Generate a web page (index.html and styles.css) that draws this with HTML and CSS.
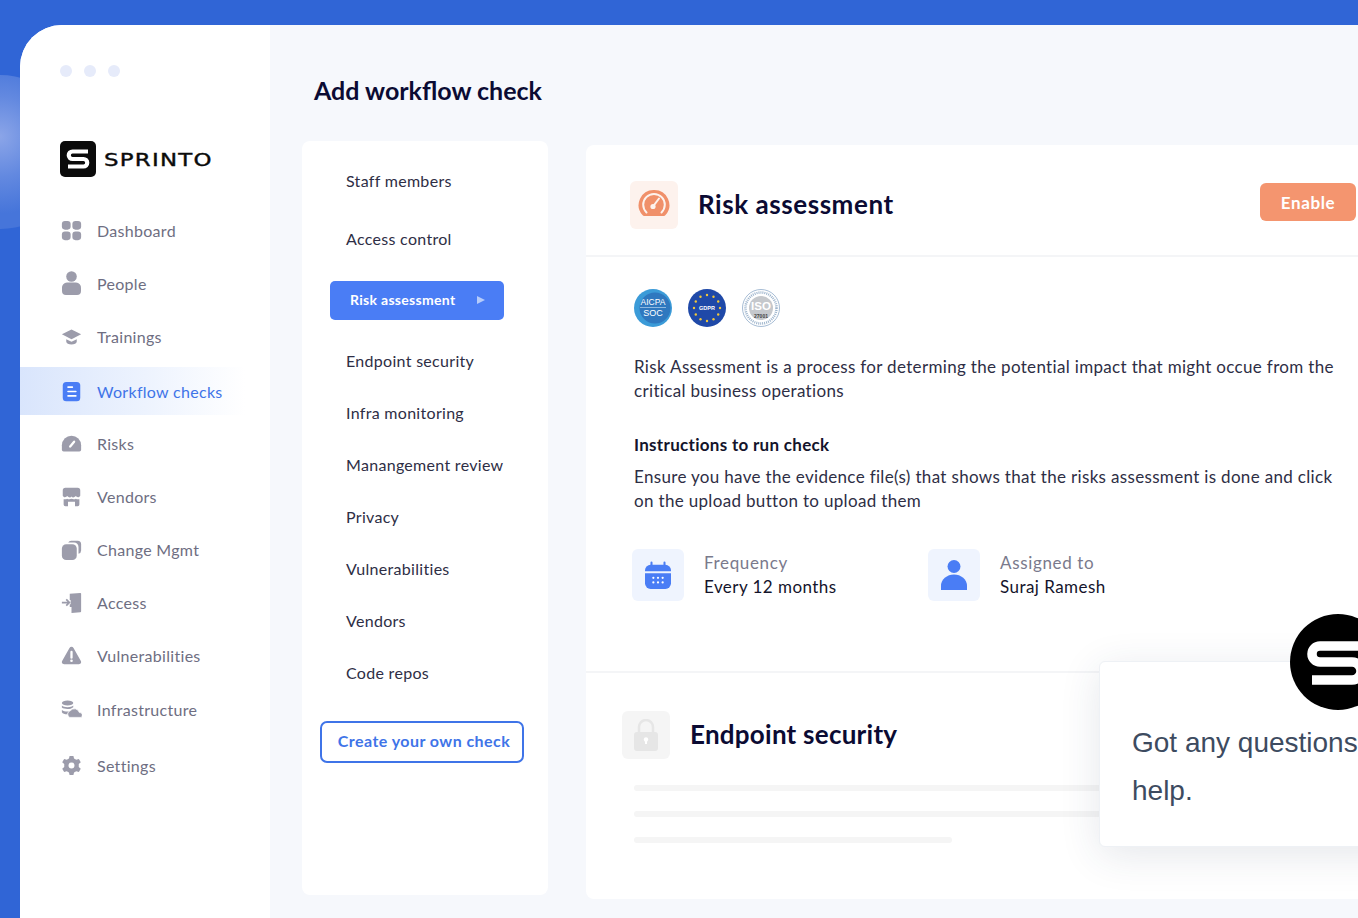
FILE: index.html
```html
<!DOCTYPE html>
<html lang="en">
<head>
    <meta charset="UTF-8">
    <meta name="viewport" content="width=device-width, initial-scale=1.0">
    <title>Sprinto - Add workflow check</title>
    <link rel="stylesheet" href="styles.css">
</head>
<body>
    <div class="glow"></div>

    <div class="app">
        <aside class="sidebar">
            <div class="dots"><span></span><span></span><span></span></div>

            <div class="logo">
                <svg class="logo-mark" viewBox="0 0 36 36">
                    <rect width="36" height="36" rx="5" fill="#0b0b0b"/>
                    <path d="M28 10.500H12.500a3.700 3.700 0 0 0 0 7.500h11a3.700 3.700 0 0 1 0 7.500H8" fill="none" stroke="#fff" stroke-width="4.200"/>
                </svg>
                <span class="logo-text">SPRINTO</span>
            </div>

            <nav class="nav">
                <a class="nav-item">
                    <svg viewBox="0 0 24 24"><rect x="1" y="1" width="10" height="10" rx="3.500"/><rect x="13" y="1" width="10" height="10" rx="3.500"/><rect x="1" y="13" width="10" height="10" rx="3.500"/><rect x="13" y="13" width="10" height="10" rx="3.500"/></svg>
                    Dashboard
                </a>
                <a class="nav-item">
                    <svg class="icon-tall" viewBox="0 0 21 24"><circle cx="10.500" cy="5.500" r="5.300"/><path d="M1 17a5 5 0 0 1 5-5.500h9a5 5 0 0 1 5 5.500v3a4 4 0 0 1-4 4H5a4 4 0 0 1-4-4z"/></svg>
                    People
                </a>
                <a class="nav-item">
                    <svg viewBox="0 0 24 24"><path d="M12 4 23 9.500 12 15 1 9.500z"/><path d="M6 15.200 12 18l6-2.800V18c0 1.800-2.800 3.200-6 3.200S6 19.800 6 18z"/></svg>
                    Trainings
                </a>
                <a class="nav-item nav-active">
                    <svg viewBox="0 0 24 24"><rect x="2" y="1" width="20" height="22" rx="4" fill="#4a7df5"/><path d="M8 7h5M8 12h9M8 17h9" stroke="#fff" stroke-width="1.800" stroke-linecap="round"/></svg>
                    Workflow checks
                </a>
                <a class="nav-item">
                    <svg viewBox="0 0 24 24"><path d="M12 3a11 11 0 0 1 11 11v5a2 2 0 0 1-2 2H3a2 2 0 0 1-2-2v-5A11 11 0 0 1 12 3z"/><path d="M10.500 15.500 15 10" stroke="#fff" stroke-width="2.600" stroke-linecap="round"/></svg>
                    Risks
                </a>
                <a class="nav-item">
                    <svg viewBox="0 0 24 24"><path d="M5 2h14a3 3 0 0 1 3 3v6c-2 3-4 1.500-5 .5-2 2-4 2-5 .5-1 1.500-3 1.500-5-.5-1 1-3 2.500-5-.5V5a3 3 0 0 1 3-3z"/><path d="M3 15c1.500.5 3 .3 4-.5 1 .7 3 1 5 .2 2 .8 4 .5 5-.2 1 .8 2.500 1 4 .5v6a2 2 0 0 1-2 2h-3v-5H8v5H5a2 2 0 0 1-2-2z"/></svg>
                    Vendors
                </a>
                <a class="nav-item">
                    <svg viewBox="0 0 24 24"><path d="M12 2h7a4 4 0 0 1 4 4v7a4 4 0 0 1-3 3.800V9a5 5 0 0 0-5-5H8.200A4 4 0 0 1 12 2z"/><rect x="1" y="6" width="17" height="18" rx="5"/></svg>
                    Change Mgmt
                </a>
                <a class="nav-item">
                    <svg viewBox="0 0 24 24"><path d="M10 2 22 1a1 1 0 0 1 1 1v20a1 1 0 0 1-1 1l-10 1V17h-2v-3h1V9h-1z"/><path d="M1 12h8M6 8.500 9.500 12 6 15.500" fill="none" stroke="#9c9cab" stroke-width="2"/></svg>
                    Access
                </a>
                <a class="nav-item">
                    <svg viewBox="0 0 24 24"><path d="M12 2c1 0 1.800.5 2.300 1.400l8.400 15c1 1.700-.2 3.600-2.200 3.600H3.500c-2 0-3.200-1.900-2.200-3.600l8.400-15C10.200 2.500 11 2 12 2z"/><path d="M12 8v6.500" stroke="#fff" stroke-width="2.600" stroke-linecap="round"/><circle cx="12" cy="18" r="1.500" fill="#fff"/></svg>
                    Vulnerabilities
                </a>
                <a class="nav-item">
                    <svg viewBox="0 0 24 24"><ellipse cx="7.500" cy="4.500" rx="6.500" ry="2.800"/><path d="M1 7.500c2 2.500 11 2.500 13 0v2c-1 .6-2 1-3 1.500-3 .8-8 .5-10-1.200zM1 12.500c2 1.500 5 2 8 1.700-1 .8-1.500 2-1.500 3.200-3 .1-5.500-.7-6.500-2.400z"/><path d="M10 21a4 4 0 0 1 .5-7.500 6 6 0 0 1 10.500 2 3 3 0 0 1 2 5.500z" stroke="#fff" stroke-width=".8"/></svg>
                    Infrastructure
                </a>
                <a class="nav-item">
                    <svg viewBox="0 0 24 24"><path d="M9.800 1h4.400l.7 3 2.500 1.400 3-.9 2.200 3.800-2.300 2.100v3.200l2.300 2.100-2.200 3.800-3-.9-2.500 1.400-.7 3H9.800l-.7-3-2.500-1.400-3 .9-2.200-3.800 2.300-2.100v-3.200L1.400 8.300l2.200-3.800 3 .9L9.100 4z"/><circle cx="12" cy="12" r="3.400" fill="#fff"/></svg>
                    Settings
                </a>
            </nav>
        </aside>

        <main class="main">
            <h1 class="page-title">Add workflow check</h1>

            <div class="columns">
                <div class="menu-card">
                    <a class="menu-item">Staff members</a>
                    <a class="menu-item menu-item-second">Access control</a>
                    <a class="menu-pill">Risk assessment <i class="pill-arrow"></i></a>
                    <a class="menu-item">Endpoint security</a>
                    <a class="menu-item">Infra monitoring</a>
                    <a class="menu-item">Manangement review</a>
                    <a class="menu-item">Privacy</a>
                    <a class="menu-item">Vulnerabilities</a>
                    <a class="menu-item">Vendors</a>
                    <a class="menu-item">Code repos</a>
                    <button class="create-btn">Create your own check</button>
                </div>

                <div class="check-card">
                    <div class="check-header">
                        <div class="check-icon">
                            <svg viewBox="0 0 32 32" width="32" height="32">
                                <path d="M16 1A15 15 0 0 1 27.500 26c-.4.6-1 1-1.700 1H6.200c-.7 0-1.300-.4-1.700-1A15 15 0 0 1 16 1z" fill="#f0906a"/>
                                <path d="M8.500 23.500A10.800 10.800 0 1 1 23.500 23.500" fill="none" stroke="#fdf2ed" stroke-width="2" stroke-linecap="round"/>
                                <path d="M15 17.500 21 9.500" stroke="#fdf2ed" stroke-width="2" stroke-linecap="round"/>
                                <circle cx="15" cy="17.500" r="2.600" fill="#fdf2ed"/>
                            </svg>
                        </div>
                        <h2 class="check-title check-title-wide">Risk assessment</h2>
                        <button class="enable-btn">Enable</button>
                    </div>

                    <div class="check-body">
                        <div class="badges">
                            <svg viewBox="0 0 38 38">
                                <circle cx="19" cy="19" r="19" fill="#3b9bd8"/>
                                <circle cx="21" cy="19" r="15.500" fill="#2f78bf"/>
                                <text x="19" y="16" class="badge-text badge-light" font-size="8.500">AICPA</text>
                                <path d="M6 18.500h26" stroke="#cfe4f5" stroke-width=".6"/>
                                <text x="19" y="27" class="badge-text badge-light" font-size="9">SOC</text>
                            </svg>
                            <svg viewBox="0 0 38 38">
                                <circle cx="19" cy="19" r="19" fill="#1f49a8"/>
                                <text x="19" y="21" class="badge-text badge-bold badge-light" font-size="5.500">GDPR</text>
                                <g fill="#f2c83a">
                                    <circle cx="19" cy="6" r="1.200"/><circle cx="25.500" cy="7.800" r="1.200"/><circle cx="30.200" cy="12.500" r="1.200"/>
                                    <circle cx="32" cy="19" r="1.200"/><circle cx="30.200" cy="25.500" r="1.200"/><circle cx="25.500" cy="30.200" r="1.200"/>
                                    <circle cx="19" cy="32" r="1.200"/><circle cx="12.500" cy="30.200" r="1.200"/><circle cx="7.800" cy="25.500" r="1.200"/>
                                    <circle cx="6" cy="19" r="1.200"/><circle cx="7.800" cy="12.500" r="1.200"/><circle cx="12.500" cy="7.800" r="1.200"/>
                                </g>
                            </svg>
                            <svg viewBox="0 0 38 38">
                                <circle cx="19" cy="19" r="18.500" fill="#fff" stroke="#8fabc9" stroke-width=".8"/>
                                <circle cx="19" cy="19" r="15.500" fill="#fff" stroke="#9db4cc" stroke-width="2.500" stroke-dasharray="1 1"/>
                                <circle cx="19" cy="19" r="12" fill="#c5c8cc"/>
                                <text x="19" y="21" class="badge-text badge-bold badge-light" font-size="11.500">ISO</text>
                                <text x="19" y="28.500" class="badge-text badge-bold badge-dark" font-size="5">27001</text>
                            </svg>
                        </div>

                        <p class="check-text">Risk Assessment is a process for determing the potential impact that might occue from the critical business operations</p>

                        <h3 class="check-subtitle">Instructions to run check</h3>
                        <p class="check-text">Ensure you have the evidence file(s) that shows that the risks assessment is done and click on the upload button to upload them</p>

                        <div class="meta-row">
                            <div class="meta">
                                <div class="meta-icon">
                                    <svg viewBox="0 0 28 32" width="26" height="30">
                                        <path d="M7 2.500v5M21 2.500v5" stroke="#4a7df5" stroke-width="2.200" stroke-linecap="round"/>
                                        <path d="M0 11a6 6 0 0 1 6-6h16a6 6 0 0 1 6 6v1H0z" fill="#4a7df5"/>
                                        <path d="M0 14h28v11a6 6 0 0 1-6 6H6a6 6 0 0 1-6-6z" fill="#4a7df5"/>
                                        <g fill="#fff"><circle cx="9" cy="19" r="1.200"/><circle cx="14" cy="19" r="1.200"/><circle cx="19" cy="19" r="1.200"/><circle cx="9" cy="24" r="1.200"/><circle cx="14" cy="24" r="1.200"/><circle cx="19" cy="24" r="1.200"/></g>
                                    </svg>
                                </div>
                                <div class="meta-text">
                                    <span class="meta-label">Frequency</span>
                                    <span class="meta-value">Every 12 months</span>
                                </div>
                            </div>
                            <div class="meta">
                                <div class="meta-icon">
                                    <svg viewBox="0 0 26 30" width="26" height="30">
                                        <circle cx="13" cy="6.500" r="6.500" fill="#4a7df5"/>
                                        <path d="M0 30v-4a13 11.500 0 0 1 26 0v4z" fill="#4a7df5"/>
                                    </svg>
                                </div>
                                <div class="meta-text">
                                    <span class="meta-label">Assigned to</span>
                                    <span class="meta-value">Suraj Ramesh</span>
                                </div>
                            </div>
                        </div>
                    </div>

                    <div class="check-next">
                        <div class="next-head">
                            <div class="next-icon">
                                <svg viewBox="0 0 24 32" width="24" height="32">
                                    <path d="M5 14V8a7 7 0 0 1 14 0v6" fill="none" stroke="#e6e6e6" stroke-width="2.500"/>
                                    <rect y="13" width="24" height="19" rx="3" fill="#e6e6e6"/>
                                    <circle cx="12" cy="20.500" r="2.200" fill="#fff"/>
                                    <path d="M12 21v4" stroke="#fff" stroke-width="2"/>
                                </svg>
                            </div>
                            <h2 class="check-title">Endpoint security</h2>
                        </div>
                        <div class="skeleton"></div>
                        <div class="skeleton"></div>
                        <div class="skeleton skeleton-short"></div>
                    </div>
                </div>
            </div>
        </main>
    </div>

    <div class="chat-popup">
        <p>Got any questions<br>help.</p>
    </div>
    <div class="chat-avatar">
        <svg viewBox="0 0 96 96" width="96" height="96">
            <path d="M84 32H30a8 8 0 0 0 0 16H62a9 9 0 0 1 0 18H22" fill="none" stroke="#fff" stroke-width="9.500"/>
        </svg>
    </div>
</body>
</html>
```

FILE: styles.css
```css
* {
    box-sizing: border-box;
}

html, body {
    height: 100%;
}

body {
    margin: 0;
    padding: 25px 0 0 20px;
    overflow: hidden;
    position: relative;
    background: #3065d6;
    font-family: "Lato", "Noto Sans", sans-serif;
    letter-spacing: .3px;
    color: #14142b;
}

.glow {
    position: absolute;
    left: -77px;
    top: 75px;
    width: 154px;
    height: 154px;
    border-radius: 50%;
    background: radial-gradient(circle at 50% 40%, #8ba5e8 0, #6389e0 40px, #4675da 77px);
}

.app {
    position: relative;
    display: flex;
    width: 1338px;
    height: 893px;
    border-top-left-radius: 42px;
    overflow: hidden;
    background: #f6f8fc;
}

/* sidebar */
.sidebar {
    width: 250px;
    flex-shrink: 0;
    background: #fff;
}

.dots {
    display: flex;
    gap: 12px;
    padding: 40px 0 0 40px;
}

.dots span {
    width: 12px;
    height: 12px;
    border-radius: 50%;
    background: #e6ebfa;
}

.logo {
    display: flex;
    align-items: center;
    gap: 8px;
    margin: 64px 0 0 40px;
}

.logo-mark {
    width: 36px;
    height: 36px;
}

.logo-text {
    font-family: "DejaVu Sans", sans-serif;
    font-size: 18px;
    letter-spacing: 1px;
    color: #0b0b0b;
    -webkit-text-stroke: .4px #0b0b0b;
    transform: scaleX(1.27);
    transform-origin: left center;
}

.nav {
    margin-top: 29px;
}

.nav-item {
    display: flex;
    align-items: center;
    height: 48px;
    margin-bottom: 5px;
    padding-left: 41px;
    font-size: 16px;
    color: #6e6e82;
}

.nav-item svg {
    width: 21px;
    height: 21px;
    margin-right: 15px;
    fill: #9c9cab;
}

.nav-item svg.icon-tall {
    height: 24px;
}

.nav-item:nth-child(4) {
    margin-top: 7px;
}

.nav-item:nth-child(10) {
    margin-top: 6px;
}

.nav-item:nth-child(11) {
    margin-top: 8px;
}

.nav-active {
    margin-bottom: 4px;
    color: #3f74e8;
    background: linear-gradient(90deg, #d9e5fc 0%, #edf3fe 50%, #fff 90%);
}

/* main area */
.main {
    flex: 1;
    min-width: 0;
    padding: 0 0 0 32px;
}

.page-title {
    margin: 49px 0 0 12px;
    font-size: 25px;
    line-height: 32px;
    font-weight: 700;
    letter-spacing: 0;
    color: #0b0b33;
}

.columns {
    display: flex;
    gap: 38px;
    margin-top: 35px;
}

.menu-card {
    width: 246px;
    height: 754px;
    flex-shrink: 0;
    padding-top: 14px;
    border-radius: 8px;
    background: #fff;
}

.menu-item {
    display: block;
    height: 52px;
    padding-left: 44px;
    font-size: 16px;
    line-height: 52px;
    color: #2e2e45;
}

.menu-item-second {
    margin-top: 6px;
}

.menu-pill {
    display: flex;
    align-items: center;
    justify-content: space-between;
    width: 174px;
    height: 39px;
    margin: 16px 0 15px 28px;
    padding: 0 19px 2px 20px;
    border-radius: 5px;
    font-size: 14px;
    font-weight: 700;
    color: #fff;
    background: #4a7df5;
}

.pill-arrow {
    width: 0;
    height: 0;
    border-left: 8px solid #b5cbfa;
    border-top: 4px solid transparent;
    border-bottom: 4px solid transparent;
}

.create-btn {
    display: block;
    width: 204px;
    height: 42px;
    margin: 22px 0 0 18px;
    padding: 0 0 4px 4px;
    border: 2px solid #3f74e8;
    border-radius: 7px;
    background: #fff;
    font-family: inherit;
    font-size: 16px;
    font-weight: 700;
    letter-spacing: .45px;
    color: #3f74e8;
}

.check-card {
    width: 790px;
    height: 754px;
    flex-shrink: 0;
    margin-top: 4px;
    border-radius: 8px;
    background: #fff;
}

.check-header {
    display: flex;
    align-items: center;
    height: 112px;
    padding: 10px 20px 0 44px;
    border-bottom: 2px solid #f4f5f7;
}

.check-icon {
    display: flex;
    align-items: center;
    justify-content: center;
    width: 48px;
    height: 48px;
    border-radius: 6px;
    background: #fdf2ed;
}

.check-title {
    margin: 0 0 2px 20px;
    font-size: 26px;
    font-weight: 700;
    letter-spacing: .25px;
    color: #0b0b33;
}

.check-title-wide {
    letter-spacing: .55px;
}

.enable-btn {
    width: 96px;
    height: 38px;
    margin: 0 0 6px auto;
    padding: 0;
    border: none;
    border-radius: 6px;
    background: #f4956f;
    font-family: inherit;
    font-size: 17px;
    font-weight: 700;
    letter-spacing: .6px;
    color: #fff;
}

.check-body {
    height: 416px;
    padding: 32px 20px 0 48px;
    border-bottom: 2px solid #f4f5f7;
}

.badges {
    display: flex;
    gap: 16px;
}

.badges svg {
    width: 38px;
    height: 38px;
}

.badge-text {
    font-family: "Liberation Sans", sans-serif;
    letter-spacing: 0;
    text-anchor: middle;
}

.badge-bold {
    font-weight: 700;
}

.badge-light {
    fill: #fff;
}

.badge-dark {
    fill: #444;
}

.check-text {
    margin: 0;
    font-size: 17px;
    line-height: 24px;
    letter-spacing: .33px;
    color: #2e2e45;
}

.badges + .check-text {
    margin-top: 28px;
}

.check-subtitle {
    margin: 30px 0 8px;
    font-size: 17px;
    line-height: 24px;
    font-weight: 700;
    color: #14142b;
}

.meta-row {
    display: flex;
    margin: 36px 0 0 -2px;
}

.meta {
    display: flex;
    align-items: center;
    gap: 20px;
    width: 296px;
}

.meta-icon {
    display: flex;
    align-items: center;
    justify-content: center;
    width: 52px;
    height: 52px;
    border-radius: 6px;
    background: #eff4fe;
}

.meta-text {
    display: flex;
    flex-direction: column;
    font-size: 17px;
    line-height: 24px;
}

.meta-label {
    letter-spacing: .65px;
    color: #7a7a8c;
}

.meta-value {
    letter-spacing: .45px;
    color: #14142b;
}

.check-next {
    padding: 38px 0 0 48px;
}

.next-head {
    display: flex;
    align-items: center;
    margin-left: -12px;
}

.next-icon {
    display: flex;
    align-items: center;
    justify-content: center;
    width: 48px;
    height: 48px;
    border-radius: 6px;
    background: #f5f5f5;
}

.skeleton {
    width: 600px;
    height: 6px;
    margin-top: 20px;
    border-radius: 3px;
    background: #f5f5f5;
}

.next-head + .skeleton {
    margin-top: 26px;
}

.skeleton-short {
    width: 318px;
}

/* chat widget */
.chat-popup {
    position: absolute;
    left: 1099px;
    top: 661px;
    width: 420px;
    height: 186px;
    padding: 57px 0 0 32px;
    border-radius: 6px;
    background: #fff;
    border: 1px solid #eef1f5;
    box-shadow: 0 8px 40px rgba(40, 60, 90, .12);
    font-family: "Liberation Sans", Arial, sans-serif;
    font-size: 28px;
    line-height: 48px;
    letter-spacing: 0;
    color: #3d4b60;
}

.chat-popup p {
    margin: 0;
    white-space: nowrap;
}

.chat-avatar {
    position: absolute;
    left: 1290px;
    top: 614px;
    width: 96px;
    height: 96px;
    border-radius: 50%;
    background: #000;
}
```
